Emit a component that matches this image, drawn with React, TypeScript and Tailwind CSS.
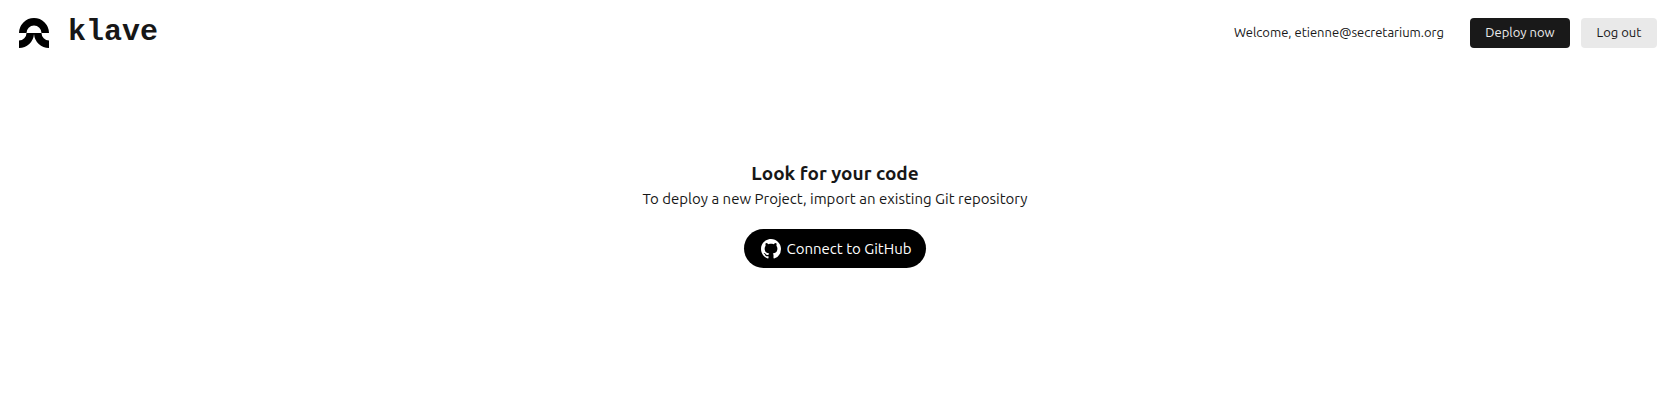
function Logo() {
  return (
    <svg className="size-[30px]" viewBox="0 0 60 60" aria-hidden="true">
      <path d="M0 30a30 30 0 0 1 60 0H45a15 15 0 0 0-30 0Z" />
      <path d="M15 30h30a15 15 0 0 0 15 15v15a30 30 0 0 1-30-28A30 30 0 0 1 0 60V45a15 15 0 0 0 15-15Z" />
    </svg>
  );
}

function GitHubMark() {
  return (
    <svg className="size-5 fill-white" viewBox="0 0 16 16" aria-hidden="true">
      <path d="M8 0C3.58 0 0 3.58 0 8c0 3.54 2.29 6.53 5.47 7.59.4.07.55-.17.55-.38 0-.19-.01-.82-.01-1.49-2.01.37-2.53-.49-2.69-.94-.09-.23-.48-.94-.82-1.13-.28-.15-.68-.52-.01-.53.63-.01 1.08.58 1.23.82.72 1.21 1.87.87 2.33.66.07-.52.28-.87.51-1.07-1.78-.2-3.64-.89-3.64-3.95 0-.87.31-1.59.82-2.15-.08-.2-.36-1.02.08-2.12 0 0 .67-.21 2.2.82.64-.18 1.32-.27 2-.27s1.36.09 2 .27c1.53-1.04 2.2-.82 2.2-.82.44 1.1.16 1.92.08 2.12.51.56.82 1.27.82 2.15 0 3.07-1.87 3.75-3.65 3.95.29.25.54.73.54 1.48 0 1.07-.01 1.93-.01 2.2 0 .21.15.46.55.38A8.01 8.01 0 0 0 16 8c0-4.42-3.58-8-8-8Z" />
    </svg>
  );
}

export default function App() {
  return (
    <div className="min-h-screen bg-white font-['Ubuntu','Noto_Sans',sans-serif] text-[#171717]">
      <header className="flex items-center justify-between pt-[18px] pr-[13px] pl-[19px]">
        <a href="/" className="flex items-center gap-[19px]">
          <Logo />
          <span className="pb-0.5 font-['Liberation_Mono',monospace] text-[30px] leading-[28px] font-bold">klave</span>
        </a>
        <div className="flex items-center text-[13px] leading-[28px]">
          <span className="mr-[26px] pb-0.5">Welcome, etienne@secretarium.org</span>
          <button type="button" className="mr-[11px] h-[30px] w-[100px] rounded bg-[#191919] pb-0.5 text-[#ededed]">
            Deploy now
          </button>
          <button type="button" className="h-[30px] w-[76px] rounded bg-[#e9e9e9] pb-0.5">
            Log out
          </button>
        </div>
      </header>
      <main className="flex flex-col items-center pt-[112px]">
        <h1 className="text-[19px] leading-[26px] font-bold">Look for your code</h1>
        <p className="text-[15px] leading-[26px]">To deploy a new Project, import an existing Git repository</p>
        <button
          type="button"
          className="mt-[17px] flex h-[39px] items-center gap-[5px] rounded-full bg-black pt-px pr-[14px] pl-[17px] text-[15px] text-white"
        >
          <GitHubMark />
          Connect to GitHub
        </button>
      </main>
    </div>
  );
}
